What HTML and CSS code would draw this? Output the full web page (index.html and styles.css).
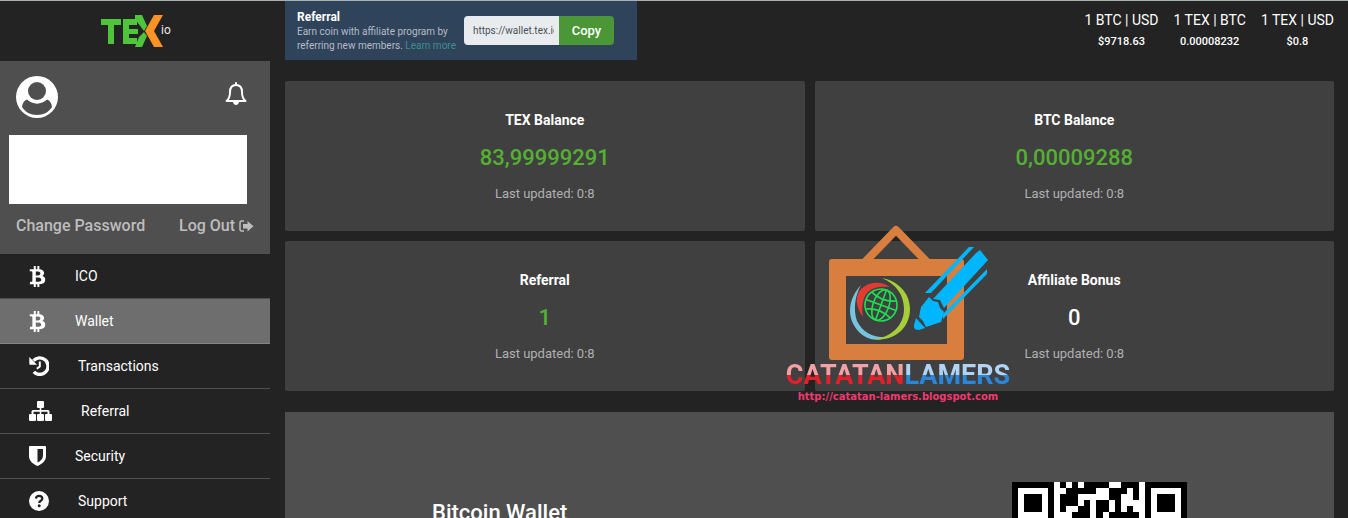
FILE: index.html
```
<!DOCTYPE html>
<html lang="en">
<head>
<meta charset="utf-8">
<title>TEX Wallet</title>
<link rel="stylesheet" href="styles.css">
</head>
<body>
<div class="app">
  <aside class="sidebar">
    <div class="brand">
      <svg class="brand-logo" width="68" height="34" viewBox="0 0 68 34" role="img" aria-label="TEX.io">
        <g fill="#4fc53b">
          <path d="M0 5h20v6h-7v19H7V11H0zM22 5h14v6H28v4h9v5h-9v4h8v6H22z"/>
        </g>
        <path fill="#232323" d="M40 1h15L47 17l8 16H37l8-16z"/>
        <path fill="#4fc53b" d="M34 1h7l5 11-3 5-9-12zM43 18l3 4-5 11h-7l4-10z"/>
        <path fill="#fb9325" d="M53 1h9l-9 16 9 16h-9l-9-16z"/>
        <text x="60" y="20" class="brand-io">io</text>
      </svg>
    </div>
    <section class="user">
      <div class="user-top">
        <svg width="42" height="42" viewBox="0 0 42 42" role="img" aria-label="Account">
          <circle cx="21" cy="21" r="21" fill="#fff"/>
          <circle cx="21" cy="15" r="9" fill="#4f4f4f"/>
          <path fill="#4f4f4f" d="M11 23.500c5.500 5.500 14.500 5.500 20 0 3 1 4.500 3.500 5 7.500-3 5-8.500 8-15 8S9 36 6 31c.5-4 2-6.500 5-7.500z"/>
        </svg>
        <button class="bell" type="button" aria-label="Notifications">
          <svg width="22" height="24" viewBox="0 0 22 24" fill="none" stroke="#fff" stroke-width="2" stroke-linejoin="round" stroke-linecap="round">
            <path d="M11 1v2M11 3c-4 0-6 3-6 7 0 5-1 7-3.500 9h19c-2.500-2-3.500-4-3.500-9 0-4-2-7-6-7z"/>
            <path d="M8 20c.5 4 5.500 4 6 0z" fill="#fff" stroke="none"/>
          </svg>
        </button>
      </div>
      <div class="user-box"></div>
      <div class="user-links">
        <a href="#">Change Password</a>
        <a href="#" class="logout">Log Out
          <svg width="15" height="13" viewBox="0 0 15 13"><path d="M5 1H2.500Q1 1 1 3v6q0 2 1.500 2H5" fill="none" stroke="#bdbdbd" stroke-width="1.500"/><path d="M4 4h4.500V1L14.500 6.200 8.500 11.500V8.500H4z" fill="#bdbdbd"/></svg>
        </a>
      </div>
    </section>
    <nav class="menu">
      <a href="#"><svg width="17" height="21" viewBox="0 0 384 512"><use href="#btc"/></svg>ICO</a>
      <a href="#" class="active"><svg width="17" height="21" viewBox="0 0 384 512"><use href="#btc"/></svg>Wallet</a>
      <a href="#"><svg width="20" height="20" viewBox="0 0 20 20"><path d="M4.500 4.700A8.300 8.300 0 1 1 4.800 15.900" fill="none" stroke="#fff" stroke-width="3.400"/><path d="M.3 1v7q0 .7.700.7h7z"/><path d="M10.800 5.500v5l-3 2.200" fill="none" stroke="#fff" stroke-width="2"/></svg>Transactions</a>
      <a href="#"><svg width="23" height="20" viewBox="0 0 23 20"><rect x="8" width="7" height="7" rx="1"/><rect y="13" width="7" height="7" rx="1"/><rect x="8" y="13" width="7" height="7" rx="1"/><rect x="16" y="13" width="7" height="7" rx="1"/><path d="M10.700 6h1.600v3H19q1.500 0 1.500 1.500V14h-2v-3.200h-6.200V14h-1.600v-3.200H4.500V14h-2v-3.500Q2.500 9 4 9h6.700z"/></svg>Referral</a>
      <a href="#"><svg width="17" height="20" viewBox="0 0 17 20"><path fill-rule="evenodd" d="M1 0h15q1 0 1 1v9c0 5-4 8-8.500 10C4 18 0 15 0 10V1q0-1 1-1zm7.500 3v13.500c3.500-1.500 5.500-4 5.500-7V3z"/></svg>Security</a>
      <a href="#"><svg width="20" height="20" viewBox="0 0 20 20"><circle cx="10" cy="10" r="10"/><path d="M6.800 7.500C7.200 5.500 8.500 4.800 10 4.800c2 0 3.300 1.100 3.300 2.700 0 2.300-3.100 2.200-3.100 4.400" fill="none" stroke="#232323" stroke-width="2.200"/><circle cx="10.200" cy="14.800" r="1.500" fill="#232323"/></svg>Support</a>
    </nav>
  </aside>

  <main class="main">
    <header class="topbar">
      <section class="promo">
        <div class="promo-text">
          <h2>Referral</h2>
          <p>Earn coin with affiliate program by<br>referring new members. <a href="#">Learn more</a></p>
        </div>
        <div class="copy">
          <input type="text" value="https://wallet.tex.io/" aria-label="Referral link" readonly>
          <button type="button">Copy</button>
        </div>
      </section>
      <dl class="rates">
        <div><dt>1 BTC | USD</dt><dd>$9718.63</dd></div>
        <div><dt>1 TEX | BTC</dt><dd>0.00008232</dd></div>
        <div><dt>1 TEX | USD</dt><dd>$0.8</dd></div>
      </dl>
    </header>

    <section class="cards">
      <article class="card"><h3>TEX Balance</h3><strong>83,99999291</strong><p>Last updated: 0:8</p></article>
      <article class="card"><h3>BTC Balance</h3><strong>0,00009288</strong><p>Last updated: 0:8</p></article>
      <article class="card"><h3>Referral</h3><strong>1</strong><p>Last updated: 0:8</p></article>
      <article class="card"><h3>Affiliate Bonus</h3><strong class="plain">0</strong><p>Last updated: 0:8</p></article>
    </section>

    <section class="wallet">
      <h2>Bitcoin Wallet</h2>
      <svg width="175" height="175" viewBox="0 0 29 29" shape-rendering="crispEdges" role="img" aria-label="Wallet QR code">
        <path fill="#fff" d="M0 0h29v29H0z"/>
        <g id="finder"><path fill-rule="evenodd" d="M0 0h7v7H0zM1 1v5h5V1zM2 2h3v3H2z"/></g>
        <use href="#finder" x="22"/>
        <use href="#finder" y="22"/>
        <path d="M8 0h1v1H8zM10 0h1v1h-1zM12 0h4v1h-4zM18 0h3v1h-3zM9 1h5v1H9zM16 1h3v1h-3zM20 1h1v2h-1zM8 2h3v2H8zM16 2h2v1h-2zM12 3h1v1h-1zM14 3h2v1h-2zM17 3h1v1h-1zM8 4h1v1H8zM11 4h2v1h-2zM14 4h2v1h-2zM17 4h1v1h-1zM19 4h1v1h-1zM10 5h3v1h-3zM14 5h1v1h-1zM16 5h5v1h-5z"/>
      </svg>
    </section>
  </main>
</div>

<div class="watermark">
  <svg class="mark-art" width="160" height="138" viewBox="0 0 160 138" aria-hidden="true">
    <path d="M37 38 68 6l31 32" fill="none" stroke="#d87f40" stroke-width="8" stroke-linejoin="round"/>
    <path fill="#d87f40" fill-rule="evenodd" d="M4 35h129q3 0 3 3v95q0 3-3 3H4q-3 0-3-3V38q0-3 3-3zm14 17v68h101V52z"/>
    <path fill="#76c4de" d="M33 61c-13 14-15 32-3 46 8 9 20 11 30 6-14 1-25-4-31-16-4-12-2-25 4-36z"/>
    <path fill="#e23c32" d="M35 93c-9-13-8-25 2-31 8-5 18-4 25 1-10-1-17 0-22 5s-7 14-5 25z"/>
    <path fill="#a6ce39" d="M54 54c16 3 28 15 28 31 0 19-16 33-36 30 16-1 30-13 30-30 0-14-8-25-22-31z"/>
    <circle cx="53" cy="81" r="17" fill="#404040"/>
    <g fill="none" stroke="#1de052" stroke-width="1.600" transform="rotate(20 53 81)">
      <circle cx="53" cy="81" r="16"/><ellipse cx="53" cy="81" rx="8" ry="16"/><path d="M53 65v32M37 81h32M40 72q13 6 26 0M40 90q13-6 26 0"/>
    </g>
    <g fill="#00b7ff">
      <path d="m97 69 44-46h5l-43 46zM105 75l43-46 4-3 8 10-44 48-4-8zM115 90l44-45v5l-44 45z"/>
      <path d="m93 83 8-10 4 4 5 1 2 6 4 4-3 10-15 5-3-6-4-4zM88 94l9 10-6 2q-6 0-5-5z"/>
    </g>
  </svg>
  <div class="mark-name"><span class="red">CATATAN</span><span class="blue">LAMERS</span></div>
  <div class="mark-url">http://catatan-lamers.blogspot.com</div>
</div>

<svg class="defs" aria-hidden="true"><defs>
  <path id="btc" d="M310.204 242.638c27.730-14.180 45.377-39.390 41.280-81.300-5.358-57.351-52.458-76.573-114.850-81.929V0h-48.528v77.203c-12.605 0-25.525.315-38.444.630V0h-48.530v79.409c-17.842.539-38.622.276-97.370 0v51.678c38.314-.678 58.417-3.140 63.023 21.427v217.429c-2.925 19.492-18.524 16.685-53.255 16.071L3.765 443.680c88.481 0 97.370.315 97.370.315V512h48.532v-67.060c13.234.315 26.154.315 38.443.315V512h48.528v-68.005c81.299-4.412 135.647-24.894 142.895-101.467 5.671-61.446-23.314-88.862-69.326-99.890zM150.608 134.553c27.415 0 113.126-8.507 113.126 48.528 0 54.515-85.710 48.212-113.126 48.212v-96.740zm0 251.776V279.821c32.772 0 133.127-9.138 133.127 53.255-.001 60.186-100.355 53.253-133.127 53.253z"/>
</defs></svg>
</body>
</html>
```
FILE: styles.css
```
* { box-sizing: border-box; }

body {
  margin: 0;
  background: #232323;
  color: #fff;
  font-family: Roboto, "Liberation Sans", sans-serif;
  font-size: 14px;
  overflow: hidden;
}

h2, h3, p, dl, dt, dd { margin: 0; }
a { color: inherit; text-decoration: none; }
svg { display: block; flex: none; }

.app {
  display: flex;
  height: 100vh;
  border-top: 1px solid #a9b0b0;
  overflow: hidden;
}

/* Sidebar */
.sidebar { flex: 0 0 270px; }

.brand {
  display: flex;
  justify-content: center;
  align-items: center;
  height: 60px;
}
.brand-logo { overflow: visible; }
.brand-io { font-size: 12px; fill: #e8e8e8; }

.user {
  height: 193px;
  padding: 15px 16px 0;
  background: #4f4f4f;
}
.user-top {
  display: flex;
  justify-content: space-between;
  align-items: center;
}
.bell {
  padding: 0;
  margin-right: 7px;
  margin-bottom: 6px;
  border: 0;
  background: none;
}
.user-box {
  height: 69px;
  margin: 17px 7px 12px -7px;
  background: #fff;
}
.user-links {
  display: flex;
  justify-content: space-between;
  color: #bdbdbd;
  font-size: 16px;
  font-weight: 500;
  line-height: 20px;
}
.logout { display: flex; align-items: center; gap: 4px; }

.menu a {
  display: flex;
  align-items: center;
  gap: 29px;
  height: 45px;
  padding-left: 29px;
  border-bottom: 1px solid #505050;
  line-height: 20px;
}
.menu svg { fill: #fff; }
.menu .active { background: #6e6e6e; border-color: #858585; }

/* Main column */
.main {
  flex: 1;
  min-width: 0;
  padding: 0 14px 0 15px;
}
.topbar {
  display: flex;
  justify-content: space-between;
  align-items: flex-start;
  margin-bottom: 21px;
}
.promo {
  display: flex;
  align-items: center;
  gap: 8px;
  height: 59px;
  padding: 0 23px 0 12px;
  background: #2f435b;
}
.promo h2 { font-size: 12px; font-weight: 700; line-height: 16px; }
.promo p {
  color: #b4bcc6;
  font-size: 10px;
  line-height: 14px;
  white-space: nowrap;
}
.promo p a { color: #3d8f90; }

.copy { display: flex; height: 29px; }
.copy input {
  width: 95px;
  padding: 0 5px 0 9px;
  border: 0;
  border-radius: 4px 0 0 4px;
  background: #e9ecef;
  color: #495057;
  font: 10px Roboto, "Liberation Sans", sans-serif;
}
.copy button {
  width: 55px;
  padding: 0;
  border: 0;
  border-radius: 0 4px 4px 0;
  background: #4b9636;
  color: #fff;
  font: 500 13px Roboto, "Liberation Sans", sans-serif;
}

.rates {
  display: flex;
  gap: 15px;
  padding-top: 9px;
  text-align: center;
}
.rates dt { line-height: 20px; }
.rates dd { font-size: 11px; font-weight: 500; line-height: 24px; }

.cards {
  display: grid;
  grid-template-columns: 1fr 1fr;
  gap: 10px;
  margin-bottom: 21px;
}
.card {
  display: flex;
  flex-direction: column;
  align-items: center;
  height: 150px;
  padding-top: 29px;
  border-radius: 2px;
  background: #404040;
}
.card h3 { font-size: 14px; font-weight: 700; line-height: 20px; }
.card strong {
  margin: 12px 0 10px;
  color: #54b032;
  font-size: 22px;
  font-weight: 500;
  line-height: 32px;
}
.card .plain { color: #fff; }
.card p { color: #b0b0b0; font-size: 13px; line-height: 20px; }

.wallet {
  display: flex;
  justify-content: space-between;
  align-items: flex-start;
  padding: 70px 147px;
  background: #4f4f4f;
}
.wallet h2 {
  padding-top: 15px;
  font-size: 22px;
  font-weight: 500;
  line-height: 32px;
}

/* Watermark laid over the cards */
.watermark {
  position: absolute;
  left: 788px;
  top: 224px;
  width: 220px;
  pointer-events: none;
}
.mark-art { margin-left: 40px; }
.mark-name {
  display: flex;
  justify-content: center;
  font: 700 27px/26px Roboto, "Liberation Sans", sans-serif;
}
.mark-name span {
  background-clip: text;
  -webkit-background-clip: text;
  color: transparent;
}
.red { background-image: linear-gradient(#f5a0a4 50%, #e0202a 50%); }
.blue { background-image: linear-gradient(#b0d4f5 50%, #2a86d8 50%); }
.mark-url {
  margin-top: 2px;
  color: #f0396f;
  font: 700 10px/14px "DejaVu Sans", sans-serif;
  text-align: center;
  white-space: nowrap;
}

.defs { position: absolute; width: 0; height: 0; }
```
